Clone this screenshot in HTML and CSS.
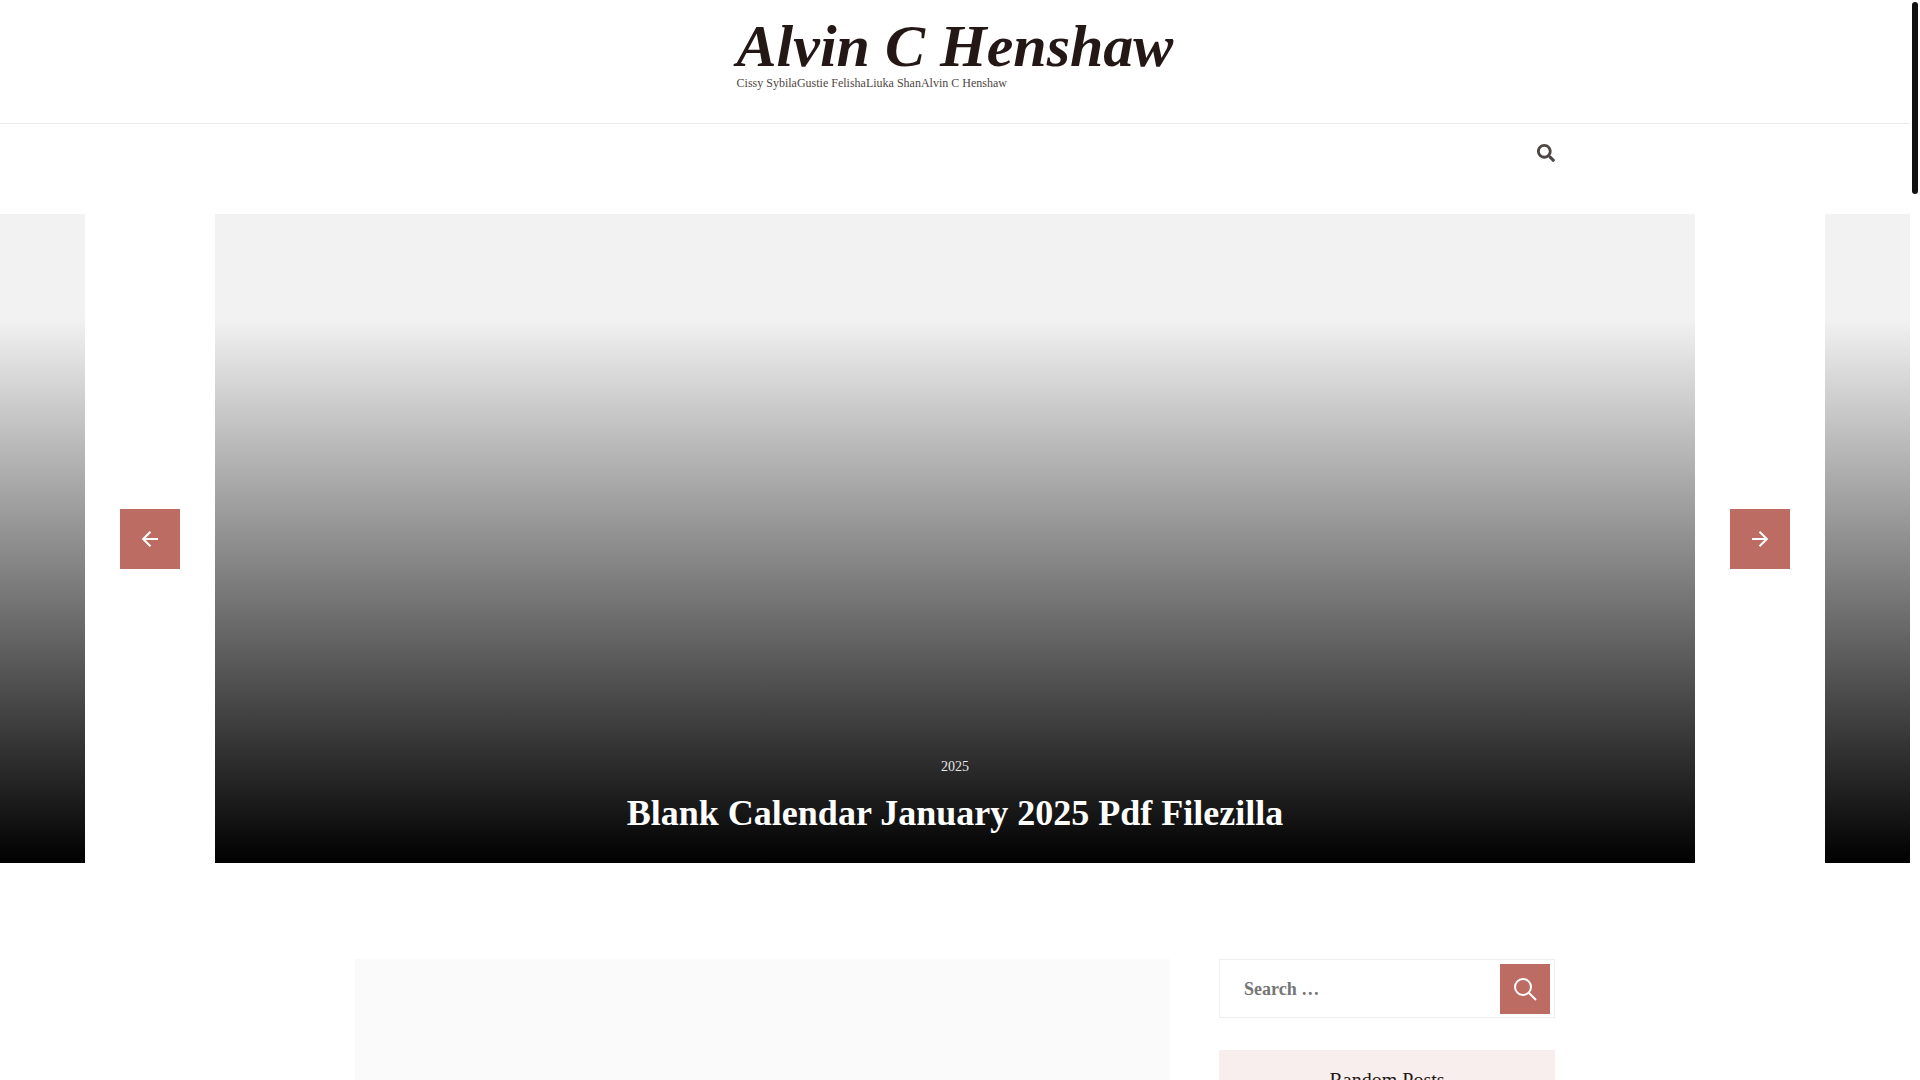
FILE: index.html
```html
<!DOCTYPE html>
<html lang="en">
<head>
<meta charset="utf-8">
<title>Alvin C Henshaw</title>
<link rel="stylesheet" href="styles.css">
</head>
<body>
<header class="site-header">
  <div class="branding">
    <h1 class="site-title"><a href="#">Alvin C Henshaw</a></h1>
    <p class="site-tagline">Cissy SybilaGustie FelishaLiuka ShanAlvin C Henshaw</p>
  </div>
</header>
<nav class="site-nav container" aria-label="Primary">
  <button class="nav-search" type="button" aria-label="Open search">
    <svg viewBox="0 0 512 512" width="18" height="18" aria-hidden="true"><path fill="currentColor" d="M505 442.700L405.300 343c-4.500-4.500-10.600-7-17-7H372c27.600-35.300 44-79.700 44-128C416 93.100 322.900 0 208 0S0 93.100 0 208s93.100 208 208 208c48.300 0 92.700-16.400 128-44v16.300c0 6.400 2.500 12.500 7 17l99.700 99.700c9.400 9.400 24.600 9.400 33.900 0l28.300-28.300c9.400-9.400 9.400-24.600.1-34zM208 336c-70.700 0-128-57.200-128-128 0-70.700 57.200-128 128-128 70.700 0 128 57.200 128 128 0 70.700-57.200 128-128 128z"/></svg>
  </button>
</nav>
<section class="slider" aria-label="Featured posts">
  <div class="slide slide-peek"></div>
  <button class="arrow" type="button" aria-label="Previous">
    <svg viewBox="0 0 16 16" width="16" height="16" aria-hidden="true"><path d="M16 8H1M8.500 .7L1.200 8l7.300 7.300" fill="none" stroke="currentColor" stroke-width="2"/></svg>
  </button>
  <article class="slide slide-main">
    <a class="slide-category" href="#">2025</a>
    <h2 class="slide-title"><a href="#">Blank Calendar January 2025 Pdf Filezilla</a></h2>
  </article>
  <button class="arrow" type="button" aria-label="Next">
    <svg viewBox="0 0 16 16" width="16" height="16" aria-hidden="true"><path d="M0 8h15M7.500 .7L14.800 8l-7.300 7.300" fill="none" stroke="currentColor" stroke-width="2"/></svg>
  </button>
  <div class="slide slide-peek"></div>
</section>
<div class="content container">
  <main class="posts"><div class="post-thumb"></div></main>
  <aside class="sidebar">
    <form class="search-form" role="search">
      <input class="search-field" type="search" placeholder="Search …" aria-label="Search for:">
      <button class="search-submit" type="submit" aria-label="Search">
        <svg viewBox="0 0 24 24" width="24" height="24" aria-hidden="true"><g fill="none" stroke="currentColor" stroke-width="2"><circle cx="10" cy="10" r="8"/><path d="M16 16l7 7"/></g></svg>
      </button>
    </form>
    <section class="widget">
      <h2 class="widget-title">Random Posts</h2>
    </section>
  </aside>
</div>
<div class="scroll-thumb" aria-hidden="true"></div>
</body>
</html>
```

FILE: styles.css
```css
* {
  box-sizing: border-box;
}

body {
  height: 100vh;
  margin: 0;
  padding-right: 10px;
  overflow: hidden;
  background: #fff;
  color: #231815;
  font-family: "Liberation Serif", "Times New Roman", serif;
}

h1, h2, p {
  margin: 0;
}

a {
  color: inherit;
  text-decoration: none;
}

button {
  display: flex;
  align-items: center;
  justify-content: center;
  padding: 0;
  border: 0;
  background: none;
  cursor: pointer;
}

.container {
  width: 100%;
  max-width: 1200px;
  margin: 0 auto;
}

.site-header {
  display: flex;
  justify-content: center;
  padding: 16px 0 33px;
  border-bottom: 1px solid #ebebeb;
}

.site-title {
  font-size: 60px;
  font-style: italic;
  line-height: 60px;
}

.site-tagline {
  color: #4f4643;
  font-size: 12px;
  line-height: 14px;
}

.site-nav {
  display: flex;
  justify-content: flex-end;
  padding: 20px 0 52px;
}

.nav-search {
  height: 18px;
  color: #4f4643;
}

.slider {
  display: flex;
  align-items: center;
  justify-content: space-between;
}

.slide {
  height: 649px;
  background: linear-gradient(to bottom, transparent 16%, #000 100%) #f2f2f2;
}

.slide-peek {
  flex: 0 0 85px;
}

.slide-main {
  display: flex;
  flex: 0 1 1480px;
  flex-direction: column;
  align-items: center;
  justify-content: flex-end;
  gap: 12px;
  padding-bottom: 26px;
  color: #fff;
}

.slide-category {
  color: #e8e8e8;
  font-size: 14px;
  line-height: 20px;
}

.slide-title {
  font-size: 36px;
  line-height: 48px;
}

.arrow {
  width: 60px;
  height: 60px;
  background: #bd6c64;
  color: #fff;
}

.content {
  display: flex;
  gap: 49px;
  margin-top: 96px;
}

.posts {
  flex: 1;
}

.post-thumb {
  height: 540px;
  background: #fafafa;
}

.sidebar {
  display: flex;
  flex: 0 0 336px;
  flex-direction: column;
  gap: 32px;
}

.search-form {
  display: flex;
  padding: 4px 4px 3px;
  border: 1px solid #efefef;
}

.search-field {
  flex: 1;
  min-width: 0;
  padding: 0 20px;
  border: 0;
  background: none;
  font: bold 18px/24px "Liberation Serif", "Times New Roman", serif;
}

.search-field::placeholder {
  color: #757575;
}

.search-submit {
  width: 50px;
  height: 50px;
  background: #bd6c64;
  color: #fff;
}

.widget-title {
  padding: 16px;
  background: #f8eeed;
  font-size: 20px;
  font-weight: 400;
  line-height: 28px;
  text-align: center;
}

.scroll-thumb {
  position: fixed;
  top: 2px;
  right: 2px;
  width: 6px;
  height: 192px;
  border-radius: 3px;
  background: #111;
}
```
